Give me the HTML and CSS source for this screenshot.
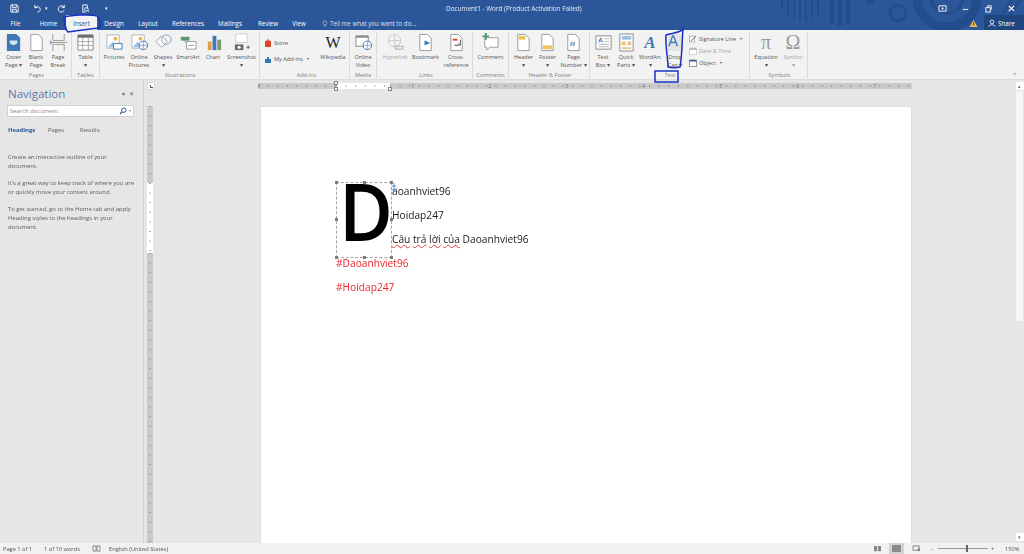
FILE: index.html
```html
<!DOCTYPE html>
<html lang="en">
<head>
<meta charset="utf-8">
<title>Document1 - Word</title>
<link rel="stylesheet" href="styles.css">
</head>
<body>
<header class="titlebar">
  <svg class="deco" viewBox="0 0 260 30" aria-hidden="true">
    <g fill="none" stroke="#234c8c">
      <path d="M12 0v10M18 0v14M24 0v18M30 0v20M36 0v22M42 0v18M48 0v14" stroke-width="2"/>
      <path d="M62 0v24M70 0v26M78 0v24" stroke-width="4"/>
      <circle cx="100" cy="-1" r="5" fill="#234c8c" stroke="none"/>
      <circle cx="128" cy="13" r="8" stroke-width="3"/>
      <circle cx="177" cy="-3" r="30" stroke-width="9"/>
      <circle cx="177" cy="-3" r="16" stroke-width="3"/>
      <path d="M222 30l20-30M230 30l20-30" stroke-width="3"/>
    </g>
  </svg>
  <div class="qat">
    <svg class="qi" viewBox="0 0 10 10"><path d="M1 1h7l1 1v7H1z M3 1v3h4V1M3 9V6h4v3" fill="none" stroke="#fff"/></svg>
    <svg class="qi q-undo" viewBox="0 0 10 10"><path d="M2 1v3h3M2 4c2-2 6-1 6 2 0 2-1 3-3 3" fill="none" stroke="#fff"/></svg>
    <span class="qcaret">▾</span>
    <svg class="qi q-redo" viewBox="0 0 10 10"><path d="M8 1v3H5M8 4a3.5 3.5 0 1 0 0 3" fill="none" stroke="#fff"/></svg>
    <svg class="qi q-prev" viewBox="0 0 10 10"><path d="M2 1h5v4M2 1v8h3" fill="none" stroke="#fff"/><circle cx="6" cy="6" r="2" fill="none" stroke="#fff"/><path d="M7.500 7.500L9 9" stroke="#fff"/></svg>
    <span class="qcaret q-more">▾</span>
  </div>
  <div class="doc-title">Document1 - Word (Product Activation Failed)</div>
  <div class="winbtns">
    <svg class="wi" viewBox="0 0 10 10"><path d="M1 2h8v6H1z" fill="none" stroke="#fff"/><path d="M4 4h2v2H4z" fill="#fff"/></svg>
    <svg class="wi" viewBox="0 0 10 10"><path d="M2 6h6" stroke="#fff"/></svg>
    <svg class="wi" viewBox="0 0 10 10"><path d="M2 4h5v5H2zM4 4V2h4v4H7" fill="none" stroke="#fff"/></svg>
    <svg class="wi" viewBox="0 0 10 10"><path d="M2 2l6 6M8 2l-6 6" stroke="#fff" stroke-width="1.300"/></svg>
  </div>
</header>

<nav class="tabs">
  <span class="tab t-file">File</span>
  <span class="tab t-home">Home</span>
  <span class="tab t-insert">Insert</span>
  <span class="tab t-design">Design</span>
  <span class="tab t-layout">Layout</span>
  <span class="tab t-ref">References</span>
  <span class="tab t-mail">Mailings</span>
  <span class="tab t-review">Review</span>
  <span class="tab t-view">View</span>
  <span class="tell"><svg class="bulb" viewBox="0 0 8 8"><path d="M4 .5a2.500 2.500 0 0 1 1.500 4.500v1h-3V5A2.500 2.500 0 0 1 4 .5zM3 7.500h2" fill="none" stroke="#dfe7f3" stroke-width=".7"/></svg>Tell me what you want to do...</span>
  <svg class="warn" viewBox="0 0 10 10"><path d="M5 1l4.500 8h-9z" fill="#e9b44c"/><path d="M5 4v3" stroke="#5a4210"/></svg>
  <span class="share"><svg class="person" viewBox="0 0 10 10"><circle cx="5" cy="3.500" r="2.300" fill="none" stroke="#fff"/><path d="M1 9.500c.5-3 7.500-3 8 0" fill="none" stroke="#fff"/></svg>Share</span>
</nav>

<section class="ribbon">
  <div class="grp g-pages">
    <div class="tools">
      <div class="tool w23"><svg class="ic" viewBox="0 0 20 20"><path d="M3 1h10l4 4v14H3z" fill="#3f78b5"/><path d="M6 8h8v3l-4 2-4-2z" fill="#d6e4f2"/></svg><span>Cover<br>Page ▾</span></div>
      <div class="tool w22"><svg class="ic" viewBox="0 0 20 20"><path d="M4 1.500h8l4 4v13H4z" fill="#fff" stroke="#9a9a9a"/></svg><span>Blank<br>Page</span></div>
      <div class="tool w22"><svg class="ic" viewBox="0 0 20 20"><path d="M4 1v7h12V1M4 19v-7h12v7M1 10h18" fill="none" stroke="#9a9a9a"/><path d="M1 8l2 2-2 2" fill="none" stroke="#3f78b5"/></svg><span>Page<br>Break</span></div>
    </div>
    <div class="glabel">Pages</div>
  </div>
  <div class="grp g-tables">
    <div class="tools">
      <div class="tool w28"><svg class="ic" viewBox="0 0 20 20"><path d="M2 2h16v16H2z" fill="#fff" stroke="#8a8a8a"/><path d="M2 2h16v3H2z" fill="#6d6d6d"/><path d="M2 9h16M2 13h16M7 5v13M13 5v13" stroke="#a5a5a5"/></svg><span>Table<br>▾</span></div>
    </div>
    <div class="glabel">Tables</div>
  </div>
  <div class="grp g-ill">
    <div class="tools">
      <div class="tool w26"><svg class="ic" viewBox="0 0 20 20"><path d="M2 2h13v14H2z" fill="#fff" stroke="#b5b5b5"/><circle cx="11" cy="6" r="2" fill="#f0b04a"/><path d="M3 15l5-6 4 6z" fill="#9dc3e6"/><path d="M9 11h9v6H9z" fill="#fff" stroke="#3f78b5"/></svg><span>Pictures</span></div>
      <div class="tool w24"><svg class="ic" viewBox="0 0 20 20"><path d="M2 2h13v14H2z" fill="#fff" stroke="#b5b5b5"/><circle cx="11" cy="6" r="2" fill="#f0b04a"/><path d="M3 15l5-6 4 6z" fill="#9dc3e6"/><circle cx="14" cy="13" r="4.500" fill="#fff" stroke="#3f78b5"/><path d="M9.500 13h9M14 8.500v9" stroke="#3f78b5" stroke-width=".6"/></svg><span>Online<br>Pictures</span></div>
      <div class="tool w24"><svg class="ic" viewBox="0 0 20 20"><path d="M2 9l6-6 6 6-6 6z" fill="#fff" stroke="#9a9a9a"/><circle cx="13" cy="7" r="5" fill="none" stroke="#7f9fc7"/></svg><span>Shapes<br>▾</span></div>
      <div class="tool w26"><svg class="ic" viewBox="0 0 20 20"><path d="M2 4h9v4H2z" fill="#5a9a6e"/><path d="M6 8l3 4" stroke="#5a9a6e"/><path d="M8 9h10v8H8z" fill="#fff" stroke="#9a9a9a"/><path d="M10 13h6" stroke="#9a9a9a"/></svg><span>SmartArt</span></div>
      <div class="tool w24"><svg class="ic" viewBox="0 0 20 20"><path d="M4 9h4v9H4z" fill="#e0a04a"/><path d="M9 3h4v15H9z" fill="#3f78b5"/><path d="M14 7h4v11h-4z" fill="#7f9a6e"/></svg><span>Chart</span></div>
      <div class="tool w33"><svg class="ic" viewBox="0 0 20 20"><path d="M4 1h12v9H4z" fill="#fff" stroke="#cfcfcf"/><path d="M3 12h9v6H3z" fill="#6a6a6a"/><circle cx="7.500" cy="15" r="1.700" fill="#fff"/><path d="M15 15h4M17 13v4" stroke="#6a6a6a"/></svg><span>Screenshot<br>▾</span></div>
    </div>
    <div class="glabel">Illustrations</div>
  </div>
  <div class="grp g-addins">
    <div class="tools">
      <div class="addin-list">
        <div class="addin"><svg class="si" viewBox="0 0 8 8"><path d="M1 2h6v6H1z" fill="#d9472b"/><path d="M3 2V1h2v1" fill="none" stroke="#d9472b"/></svg>Store</div>
        <div class="addin"><svg class="si" viewBox="0 0 8 8"><path d="M1 3h2V1h2v2h2v4H1z" fill="#2f78b5"/></svg>My Add-ins <span class="cr">▾</span></div>
      </div>
      <div class="tool w30"><div class="wiki">W</div><span>Wikipedia</span></div>
    </div>
    <div class="glabel">Add-ins</div>
  </div>
  <div class="grp g-media">
    <div class="tools">
      <div class="tool w27"><svg class="ic" viewBox="0 0 20 20"><path d="M2 3h13v11H2z" fill="#fff" stroke="#8a8a8a"/><path d="M2 3h13v2H2z" fill="#8a8a8a"/><circle cx="14" cy="13" r="4.500" fill="#fff" stroke="#3f78b5"/><path d="M9.500 13h9M14 8.500v9" stroke="#3f78b5" stroke-width=".6"/></svg><span>Online<br>Video</span></div>
    </div>
    <div class="glabel">Media</div>
  </div>
  <div class="grp g-links">
    <div class="tools">
      <div class="tool w31 off"><svg class="ic" viewBox="0 0 20 20"><circle cx="9" cy="8" r="6.500" fill="none" stroke="#c9c9c9"/><path d="M2.500 8h13M9 1.500v13" stroke="#c9c9c9"/><path d="M10 14h8v3h-8z" fill="#f3f3f3" stroke="#aaa"/></svg><span>Hyperlink</span></div>
      <div class="tool w30"><svg class="ic" viewBox="0 0 20 20"><path d="M4 1.500h8l4 4v13H4z" fill="#fff" stroke="#9a9a9a"/><path d="M9 8l6 2.500L9 13v4z" fill="#2f78b5"/></svg><span>Bookmark</span></div>
      <div class="tool w32"><svg class="ic" viewBox="0 0 20 20"><path d="M4 1.500h8l4 4v13H4z" fill="#fff" stroke="#9a9a9a"/><path d="M6 7h5" stroke="#d9472b" stroke-width="2"/><path d="M8 13h5" stroke="#7a7a7a" stroke-width="1.500"/><path d="M14 7v6l-2-2" fill="none" stroke="#555"/></svg><span>Cross-<br>reference</span></div>
    </div>
    <div class="glabel">Links</div>
  </div>
  <div class="grp g-comments">
    <div class="tools">
      <div class="tool w36"><svg class="ic" viewBox="0 0 20 20"><path d="M4 5h14v10H9l-3 3v-3H4z" fill="#fff" stroke="#9a9a9a"/><path d="M5 0v7M1.500 3.500h7" stroke="#4d9a6a" stroke-width="2"/></svg><span>Comment</span></div>
    </div>
    <div class="glabel">Comments</div>
  </div>
  <div class="grp g-hf">
    <div class="tools">
      <div class="tool w25"><svg class="ic" viewBox="0 0 20 20"><path d="M4 1.500h8l4 4v13H4z" fill="#fff" stroke="#9a9a9a"/><path d="M5 3h7v4H5z" fill="#f0c45c"/></svg><span>Header<br>▾</span></div>
      <div class="tool w23"><svg class="ic" viewBox="0 0 20 20"><path d="M4 1.500h8l4 4v13H4z" fill="#fff" stroke="#9a9a9a"/><path d="M5 13h10v4H5z" fill="#f0c45c"/></svg><span>Footer<br>▾</span></div>
      <div class="tool w29"><svg class="ic" viewBox="0 0 20 20"><path d="M4 1.500h8l4 4v13H4z" fill="#fff" stroke="#9a9a9a"/><path d="M8 9l-1 5M11 9l-1 5M7 10.500h5M6.500 12.500h5" stroke="#3f78b5" stroke-width=".7"/></svg><span>Page<br>Number ▾</span></div>
    </div>
    <div class="glabel">Header &amp; Footer</div>
  </div>
  <div class="grp g-text">
    <div class="tools">
      <div class="tool w24"><svg class="ic" viewBox="0 0 20 20"><path d="M2 3h16v14H2z" fill="#fff" stroke="#8a8a8a"/><path d="M5 10l2-5 2 5M5.700 8.500h2.600" fill="none" stroke="#3f78b5"/><path d="M11 6h5M11 9h5M5 12h11M5 14.500h11" stroke="#b5b5b5"/></svg><span>Text<br>Box ▾</span></div>
      <div class="tool w22"><svg class="ic" viewBox="0 0 20 20"><path d="M3 1h14v18H3z" fill="#fff" stroke="#8a8a8a"/><path d="M5 3h10v4H5z" fill="#9dc3e6"/><path d="M5 9h4v4H5z" fill="#f0c45c"/><path d="M11 9h4v4h-4zM5 15h10v2H5z" fill="#e0c79a"/></svg><span>Quick<br>Parts ▾</span></div>
      <div class="tool w26"><div class="wa">A</div><span>WordArt<br>▾</span></div>
      <div class="tool w24"><svg class="ic" viewBox="0 0 20 20"><path d="M2 1h16v18H2z" fill="#e4e4e4"/><path d="M3 14l4-11h1l4 11M5 10h5" fill="none" stroke="#3f78b5" stroke-width="1.500"/></svg><span>Drop<br>Cap ▾</span></div>
      <div class="text-list">
        <div class="tl"><svg class="si" viewBox="0 0 8 8"><path d="M.5 1h5v6h-5z" fill="#fff" stroke="#8a8a8a" stroke-width=".6"/><path d="M2 6l5-5" stroke="#3f78b5"/></svg>Signature Line <span class="cr">▾</span></div>
        <div class="tl off"><svg class="si" viewBox="0 0 8 8"><path d="M.5 1h7v6.500h-7z" fill="#fff" stroke="#bbb" stroke-width=".6"/><path d="M.5 1h7v2h-7z" fill="#bbb"/></svg>Date &amp; Time</div>
        <div class="tl"><svg class="si" viewBox="0 0 8 8"><path d="M.5 1h7v6.500h-7z" fill="#fff" stroke="#555" stroke-width=".6"/><path d="M.5 1h7v1.500h-7z" fill="#2f5f9f"/></svg>Object <span class="cr">▾</span></div>
      </div>
    </div>
    <div class="glabel">Text</div>
  </div>
  <div class="grp g-sym">
    <div class="tools">
      <div class="tool w28"><div class="mathg">π</div><span>Equation<br>▾</span></div>
      <div class="tool w26 off"><div class="mathg">Ω</div><span>Symbol<br>▾</span></div>
    </div>
    <div class="glabel">Symbols</div>
  </div>
  <div class="collapse">⌃</div>
</section>

<main class="workspace">
  <aside class="nav">
    <div class="nav-head"><h1>Navigation</h1><span class="nav-ctl">▾</span><span class="nav-x">✕</span></div>
    <div class="search"><span>Search document</span><svg class="mag" viewBox="0 0 8 8"><circle cx="4.800" cy="3.200" r="2.200" fill="none" stroke="#2b579a" stroke-width="1"/><path d="M3 5L1 7" stroke="#2b579a" stroke-width="1.200"/></svg><i>▾</i></div>
    <div class="nav-tabs"><b>Headings</b><span>Pages</span><span>Results</span></div>
    <p class="p1">Create an interactive outline of your document.</p>
    <p>It's a great way to keep track of where you are or quickly move your content around.</p>
    <p>To get started, go to the Home tab and apply Heading styles to the headings in your document.</p>
  </aside>

  <div class="canvas">
    <div class="corner"><span><i></i></span></div>
    <div class="hruler">
      <div class="hr-gray hr-left"><span>1</span></div>
      <div class="hr-white"></div>
      <div class="hr-gray hr-right"><span>1</span><span>2</span><span>3</span><span>4</span><span>5</span><span>6</span><span>7</span></div>
      <i class="marker m1"></i><i class="marker m2"></i><i class="marker m3"></i>
    </div>
    <div class="vruler"><div class="vr-gray vr-a"></div><div class="vr-white"></div><div class="vr-gray vr-b"></div></div>
    <article class="page">
      <div class="dropcap-row">
        <div class="frame">
          <span class="big">D</span>
          <i class="h tl1"></i><i class="h tm"></i><i class="h tr"></i><i class="h ml"></i><i class="h mr"></i><i class="h bl"></i><i class="h bm"></i><i class="h br"></i>
          <svg class="anchor" viewBox="0 0 6 8"><path d="M3 0v8M1 3h4M0 5c1 3 5 3 6 0" fill="none" stroke="#5b8fc7"/></svg>
        </div>
        <div class="lines">
          <div class="line">aoanhviet96</div>
          <div class="line">Hoidap247</div>
          <div class="line"><u>Câu</u> <u>trả</u> <u>lời</u> <u>của</u> Daoanhviet96</div>
        </div>
      </div>
      <div class="line red">#Daoanhviet96</div>
      <div class="line red">#Hoidap247</div>
    </article>
  </div>

  <div class="vscroll"><span class="sb-btn">▴</span><div class="thumb"></div><span class="sb-btn sb-end">▾</span></div>
</main>

<footer class="status">
  <span class="s1">Page 1 of 1</span>
  <span class="s2">1 of 10 words</span>
  <svg class="book" viewBox="0 0 10 8"><path d="M1 1h3.500v6H1zM5.500 1H9v6H5.500z" fill="none" stroke="#666" stroke-width=".8"/></svg>
  <span class="s3">English (United States)</span>
  <div class="s-right">
    <svg class="vi" viewBox="0 0 10 8"><path d="M1 1h3.500v6H1zM5.500 1H9v6H5.500z" fill="#888"/></svg>
    <span class="vi-sel"><i></i></span>
    <svg class="vi v3" viewBox="0 0 10 8"><path d="M1 1h7v5H1z" fill="none" stroke="#777"/><path d="M6 4h3v3H6z" fill="#888"/></svg>
    <span class="minus">-</span>
    <div class="slider"><i></i></div>
    <span class="plus">+</span>
    <span class="zoom">150%</span>
  </div>
</footer>

<svg class="ink" viewBox="0 0 1024 554" aria-hidden="true">
  <path d="M64 17C72 15 90 14 97 16C100 18 102 25 99 28C90 29 75 31 68 32C65 30 65 22 64 17Z"/>
  <path d="M683 29C680 33 672 33 666 35C665 45 668 58 668 67C672 68 676 68 680 67C682 58 682 40 683 29Z"/>
  <path d="M655 71H678V82H655Z"/>
</svg>
</body>
</html>
```

FILE: styles.css
```css
* { box-sizing: border-box; }
html, body { margin: 0; padding: 0; }
body {
  width: 1024px; height: 554px; overflow: hidden; position: relative;
  display: flex; flex-direction: column;
  font-family: "Open Sans", "Noto Sans", sans-serif;
  background: #e6e6e6; color: #444;
  filter: blur(.3px);
}

/* title bar */
.titlebar { height: 15px; background: #2b579a; display: flex; align-items: center; position: relative; color: #fff; padding-top: 1px; }
.deco { position: absolute; left: 770px; top: 0; width: 260px; height: 30px; z-index: 1; }
.qat { display: flex; align-items: center; padding-left: 10px; width: 446px; flex: none; position: relative; z-index: 2; }
.qi { width: 9px; height: 9px; display: block; }
.q-undo { margin-left: 14px; }
.q-redo { margin-left: 7px; }
.q-prev { margin-left: 15px; }
.qcaret { font-size: 5px; margin-left: 3px; width: 5px; }
.q-more { margin-left: 15px; }
.doc-title { font-size: 6.4px; line-height: 9px; color: #e8eef7; position: relative; z-index: 2; white-space: nowrap; }
.winbtns { margin-left: auto; display: flex; gap: 14px; padding-right: 8px; position: relative; z-index: 2; }
.wi { width: 9px; height: 9px; display: block; }

/* tabs */
.tabs { height: 15px; background: #2b579a; display: flex; align-items: stretch; font-size: 6.2px; color: #fff; position: relative; }
.tab { display: flex; align-items: center; justify-content: center; padding-top: 2px; position: relative; z-index: 2; }
.t-file { width: 31px; }
.t-home { width: 35px; }
.t-insert { width: 31px; background: #f3f3f3; color: #2b579a; }
.t-design { width: 34px; }
.t-layout { width: 34px; }
.t-ref { width: 46px; }
.t-mail { width: 38px; }
.t-review { width: 38px; }
.t-view { width: 24px; }
.tell { margin-left: 11px; padding-top: 2px; display: flex; align-items: center; gap: 2px; color: #d6e0ef; z-index: 2; position: relative; }
.bulb { width: 6px; height: 7px; }
.warn { margin: 4px 6px 0 auto; width: 9px; height: 9px; position: relative; z-index: 2; }
.share { width: 40px; background: #1f467f; display: flex; align-items: center; gap: 2px; padding: 1px 0 0 4px; position: relative; z-index: 2; }
.person { width: 8px; height: 8px; }

/* ribbon */
.ribbon { height: 50px; background: #f2f2f2; display: flex; font-size: 5.6px; line-height: 8.400px; color: #555; border-bottom: 1px solid #dcdcdc; }
.grp { display: flex; flex-direction: column; border-right: 1px solid #dadada; height: 46px; margin-top: 2px; }
.g-pages { width: 72px; padding-left: 2px; }
.g-tables { width: 28px; }
.g-ill { width: 160px; padding-left: 1px; }
.g-addins { width: 90px; padding-left: 4px; }
.g-media { width: 27px; }
.g-links { width: 96px; padding-left: 3px; }
.g-comments { width: 36px; }
.g-hf { width: 81px; padding-left: 2px; }
.g-text { width: 160px; padding-left: 1px; }
.g-sym { width: 58px; padding-left: 2px; }
.tools { display: flex; height: 38px; flex: none; }
.tool { display: flex; flex-direction: column; align-items: center; text-align: center; white-space: nowrap; padding-top: 1px; }
.tool > span { margin-top: 1px; }
.ic { width: 19px; height: 19px; display: block; flex: none; }
.off { color: #a5a5a5; }
.w22 { width: 22px; } .w23 { width: 23px; } .w24 { width: 24px; } .w25 { width: 25px; }
.w26 { width: 26px; } .w27 { width: 27px; } .w28 { width: 28px; } .w29 { width: 29px; }
.w30 { width: 30px; } .w31 { width: 31px; } .w32 { width: 32px; } .w33 { width: 33px; }
.w36 { width: 36px; }
.glabel { text-align: center; color: #808080; line-height: 8px; margin-top: 1px; }
.addin-list { width: 54px; flex: none; display: flex; flex-direction: column; gap: 8px; padding-top: 7px; }
.addin { display: flex; align-items: center; gap: 2px; white-space: nowrap; }
.si { width: 8px; height: 8px; flex: none; }
.cr { font-size: 4px; margin-left: 2px; }
.wiki { font-family: "Liberation Serif", serif; font-size: 16px; line-height: 19px; height: 19px; color: #222; }
.wa { font-family: "Liberation Serif", serif; font-style: italic; font-weight: bold; font-size: 17px; line-height: 19px; height: 19px; color: #3f78b5; }
.mathg { font-family: "Liberation Serif", serif; font-size: 20px; line-height: 19px; height: 19px; color: #9a9a9a; }
.text-list { margin-left: 2px; display: flex; flex-direction: column; gap: 4px; padding-top: 3px; white-space: nowrap; }
.tl { display: flex; align-items: center; gap: 2px; height: 8px; }
.collapse { margin: 0 6px 0 auto; align-self: flex-end; font-size: 7px; line-height: 7px; color: #777; }

/* workspace */
.workspace { flex: 1; min-height: 0; display: flex; background: #e6e6e6; }
.nav { width: 144px; flex: none; border-right: 1px solid #cfcfcf; padding: 7px 9px 0 8px; font-size: 5.9px; line-height: 8.600px; color: #5a5a5a; }
.nav-head { display: flex; align-items: center; height: 14px; }
.nav-head h1 { margin: 0; font-size: 11.500px; font-weight: 400; line-height: 14px; color: #5b78ab; flex: 1; }
.nav-ctl { font-size: 6px; margin-right: 4px; color: #666; }
.nav-x { font-size: 6px; color: #666; }
.search { margin: 4px 0 0 -1px; width: 127px; height: 12px; background: #fff; border: 1px solid #d0d0d0; display: flex; align-items: center; padding: 0 2px; color: #8a8a8a; }
.search span { flex: 1; }
.mag { width: 8px; height: 8px; }
.search i { font-style: normal; font-size: 4px; margin-left: 2px; }
.nav-tabs { display: flex; margin-top: 9px; height: 9px; line-height: 9px; }
.nav-tabs b { width: 40px; color: #2b579a; }
.nav-tabs span { width: 32px; }
.nav p { margin: 0 0 9px; }
.nav p.p1 { margin-top: 18px; }

.canvas { flex: 1; min-width: 0; display: grid; grid-template-columns: 9px 1fr; grid-template-rows: 25px 1fr; padding-left: 3px; }
.corner { padding-top: 2px; }
.corner span { display: block; width: 8px; height: 8px; background: #fff; border: 1px solid #d8d8d8; padding: 2px 0 0 2px; }
.corner i { display: block; width: 3px; height: 3px; border-left: 1px solid #555; border-bottom: 1px solid #555; }
.hruler { margin: 2px 0 0 102px; width: 654px; height: 8px; display: flex; position: relative; font-size: 4.500px; line-height: 8px; color: #666; }
.hr-gray { background: #c9c9c9 linear-gradient(90deg, #8f8f8f 0 1px, transparent 1px) 0 50% / 9.600px 2px repeat-x; display: flex; height: 6px; margin-top: 1px; line-height: 6px; }
.hr-left { width: 78px; }
.hr-left span { width: 2px; }
.hr-white { width: 54px; height: 6px; margin-top: 1px; background: #fff linear-gradient(90deg, #aaa 0 1px, transparent 1px) 0 50% / 9.600px 2px repeat-x; }
.hr-right { width: 522px; }
.hr-right span { width: 77px; text-align: right; flex: none; }
.hr-right span:first-child { width: 24px; }
.marker { position: absolute; width: 4px; height: 4px; background: #f3f3f3; border: 1px solid #888; }
.m1 { left: 76px; top: -1px; }
.m2 { left: 76px; top: 5px; }
.m3 { left: 130px; top: 5px; }
.vruler { margin-top: 1px; width: 6px; display: flex; flex-direction: column; }
.vr-gray { background: #c9c9c9 linear-gradient(180deg, #9a9a9a 0 1px, transparent 1px) 50% 0 / 2px 9.600px repeat-y; }
.vr-a { height: 77px; flex: none; }
.vr-white { height: 70px; flex: none; background: #fff linear-gradient(180deg, #aaa 0 1px, transparent 1px) 50% 0 / 2px 9.600px repeat-y; }
.vr-b { flex: 1; }
.page { margin-left: 104px; width: 652px; background: #fff; padding: 72px 0 0 75px; border: 1px solid #dedede; border-bottom: 0; margin-top: 1px; font-size: 10.200px; line-height: 24px; color: #1c1c1c; }
.dropcap-row { display: flex; height: 72px; }
.frame { width: 56px; height: 76px; margin-top: 3px; flex: none; position: relative; outline: 1px dashed #a6a6a6; outline-offset: -1px; }
.big { position: absolute; left: 3px; top: -10px; font-size: 80px; font-weight: 600; line-height: 76px; color: #000; transform: scaleX(.92); transform-origin: left center; }
.h { position: absolute; width: 3px; height: 3px; background: #7c7c7c; }
.tl1 { left: -1px; top: -1px; } .tm { left: 27px; top: -1px; } .tr { right: -1px; top: -1px; }
.ml { left: -1px; top: 36px; } .mr { right: -1px; top: 36px; }
.bl { left: -1px; bottom: -1px; } .bm { left: 27px; bottom: -1px; } .br { right: -1px; bottom: -1px; }
.anchor { position: absolute; left: 55px; top: 1px; width: 6px; height: 8px; }
.lines { display: flex; flex-direction: column; }
.line { height: 24px; white-space: nowrap; }
.line u { text-decoration: underline wavy #e03c3c; text-decoration-thickness: .6px; text-underline-offset: 1px; }
.red { color: #e6262c; }

.vscroll { width: 9px; flex: none; display: flex; flex-direction: column; align-items: center; }
.sb-btn { width: 8px; height: 8px; background: #fff; font-size: 5px; line-height: 8px; text-align: center; margin-top: 2px; color: #666; }
.thumb { width: 7px; height: 230px; margin-top: 1px; background: #f6f6f6; }
.sb-end { margin-top: auto; margin-bottom: 2px; }

/* status */
.status { height: 11px; background: #f1f1f1; display: flex; align-items: center; font-size: 5.700px; color: #555; }
.s1 { margin-left: 3px; width: 41px; }
.s2 { width: 48px; }
.book { width: 9px; height: 7px; }
.s3 { margin-left: 8px; }
.s-right { margin-left: auto; display: flex; align-items: center; height: 11px; }
.vi { width: 9px; height: 7px; display: block; }
.vi-sel { width: 15px; height: 11px; margin-left: 7px; background: #d2d2d2; display: flex; align-items: center; justify-content: center; }
.vi-sel i { width: 9px; height: 7px; background: #8a8a8a; }
.v3 { margin-left: 8px; }
.minus { margin-left: 10px; width: 5px; }
.slider { width: 50px; height: 1px; background: #999; position: relative; margin: 0 3px 0 2px; }
.slider i { position: absolute; left: 28px; top: -3px; width: 2px; height: 7px; background: #666; }
.plus { width: 6px; }
.zoom { margin-left: 8px; width: 19px; }

/* blue pen marks drawn over the screenshot */
.ink { position: absolute; left: 0; top: 0; width: 1024px; height: 554px; pointer-events: none; z-index: 5; }
.ink path { fill: none; stroke: #1a30c4; stroke-width: 1.500; }
```
